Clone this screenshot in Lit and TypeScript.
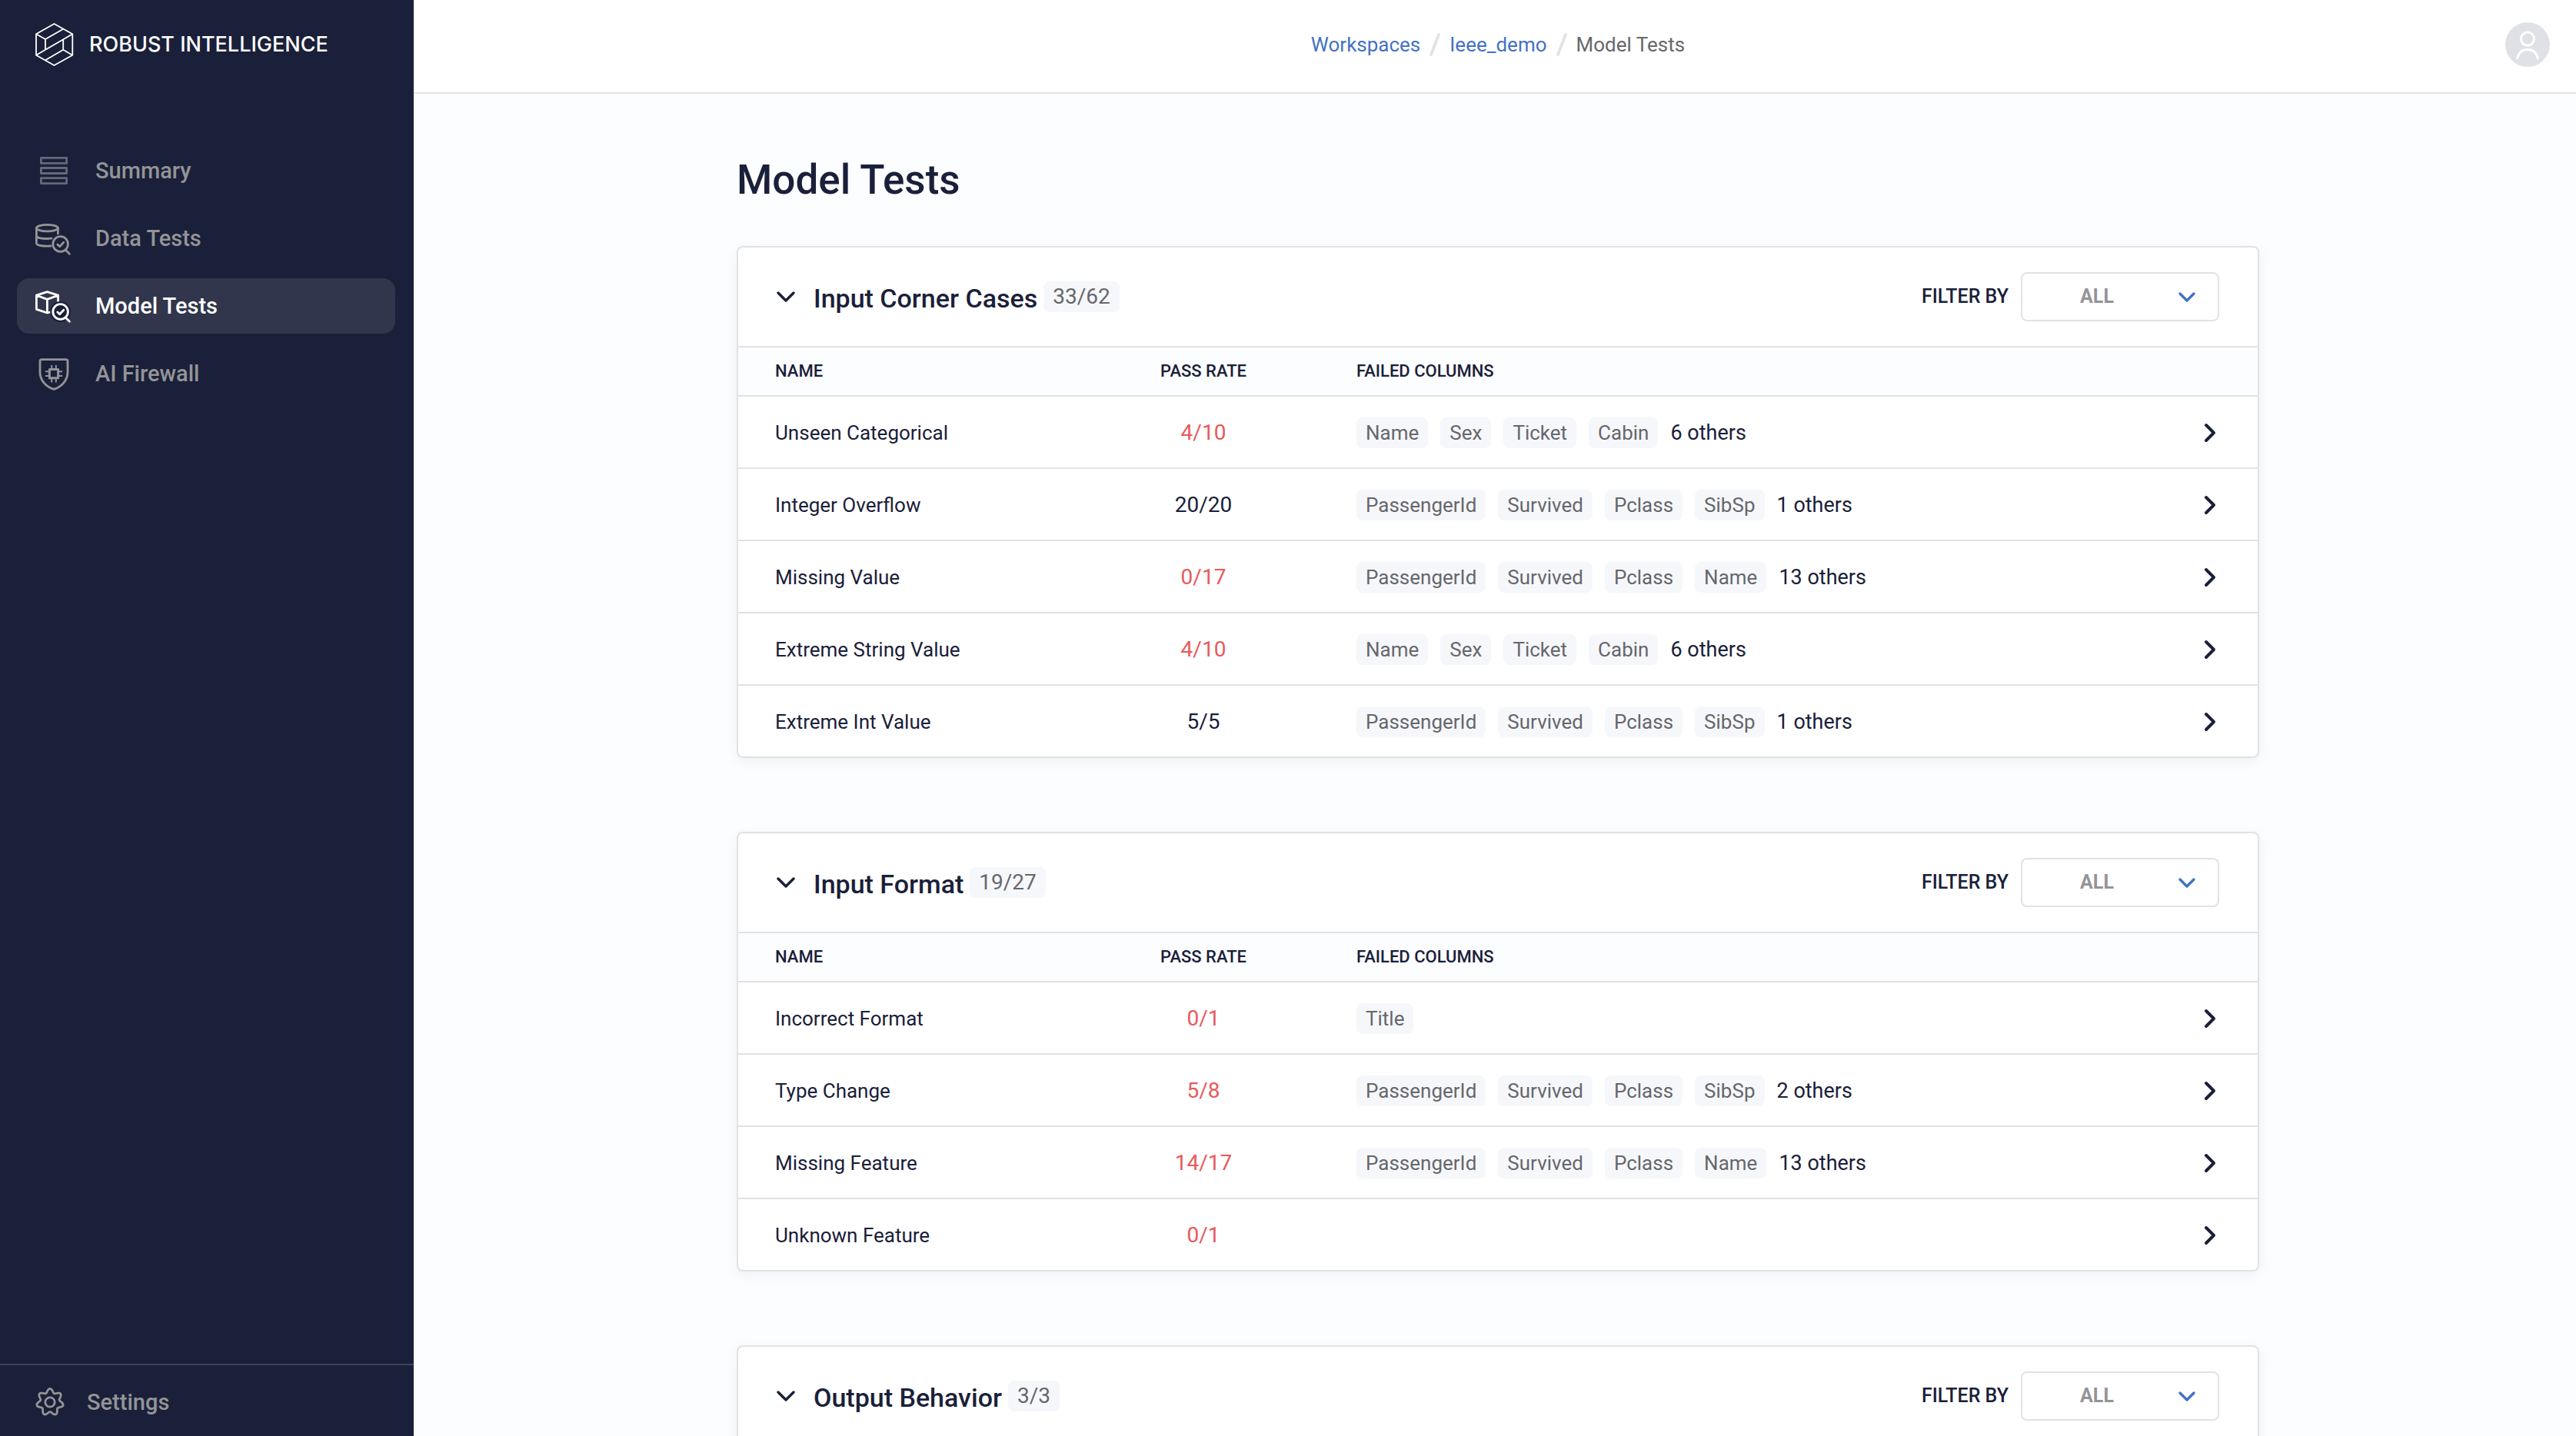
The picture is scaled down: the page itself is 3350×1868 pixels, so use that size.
import { LitElement, html, svg, css, nothing } from "lit";
import { customElement, property, state } from "lit/decorators.js";
import { classMap } from "lit/directives/class-map.js";

interface TestRow {
  name: string;
  passed: number;
  total: number;
  columns: string[];
  others?: number;
}

interface TestGroup {
  id: string;
  title: string;
  score: string;
  rows: TestRow[];
}

const GROUPS: TestGroup[] = [
  {
    id: "corner",
    title: "Input Corner Cases",
    score: "33/62",
    rows: [
      { name: "Unseen Categorical", passed: 4, total: 10, columns: ["Name", "Sex", "Ticket", "Cabin"], others: 6 },
      { name: "Integer Overflow", passed: 20, total: 20, columns: ["PassengerId", "Survived", "Pclass", "SibSp"], others: 1 },
      { name: "Missing Value", passed: 0, total: 17, columns: ["PassengerId", "Survived", "Pclass", "Name"], others: 13 },
      { name: "Extreme String Value", passed: 4, total: 10, columns: ["Name", "Sex", "Ticket", "Cabin"], others: 6 },
      { name: "Extreme Int Value", passed: 5, total: 5, columns: ["PassengerId", "Survived", "Pclass", "SibSp"], others: 1 },
    ],
  },
  {
    id: "format",
    title: "Input Format",
    score: "19/27",
    rows: [
      { name: "Incorrect Format", passed: 0, total: 1, columns: ["Title"] },
      { name: "Type Change", passed: 5, total: 8, columns: ["PassengerId", "Survived", "Pclass", "SibSp"], others: 2 },
      { name: "Missing Feature", passed: 14, total: 17, columns: ["PassengerId", "Survived", "Pclass", "Name"], others: 13 },
      { name: "Unknown Feature", passed: 0, total: 1, columns: [] },
    ],
  },
  { id: "output", title: "Output Behavior", score: "3/3", rows: [] },
];

/* Seven-lobed gear outline around (24, 24). */
const gearPath = (() => {
  const points: string[] = [];
  for (let i = 0; i < 140; i++) {
    const a = (i / 140) * Math.PI * 2;
    const r = 15 + 2.5 * Math.cos(7 * a);
    points.push(`${(24 + r * Math.sin(a)).toFixed(2)} ${(24 - r * Math.cos(a)).toFixed(2)}`);
  }
  return `M${points.join("L")}Z`;
})();

const loupe = svg`
  <circle cx="32.6" cy="31.5" r="9.8" />
  <path d="M39.6 39.6L44.4 44.2M28.8 32L31.6 34.8L36.8 29.2" />`;

const ICONS = {
  summary: svg`
    <g stroke="#646879" stroke-linejoin="round" stroke-width="2.8">
      <rect x="7.4" y="7.4" width="33.2" height="7" />
      <rect x="7.4" y="20.5" width="33.2" height="7" />
      <rect x="7.4" y="33.6" width="33.2" height="7" />
    </g>`,
  data: svg`
    <ellipse cx="15.4" cy="10.6" rx="14" ry="4.3" />
    <path d="M1.4 10.6V30.5C1.4 32.6 8 34.6 20 34M1.4 20.5C1.4 23.6 9 25.2 21 24.2M29.4 10.6V18" />
    ${loupe}`,
  model: svg`
    <path d="M1.4 10.2L15.4 5.6L29.6 10.2L15.4 15.4ZM1.4 10.2V28.4L15.4 33L19.4 32M15.4 15.4V33M29.6 10.2V18.6" />
    <circle cx="32.6" cy="31.5" r="13.4" fill="#1a2039" stroke="none" />
    ${loupe}`,
  firewall: svg`
    <path d="M8.2 5.6H39.8Q42 5.6 42 7.8V22C42 33 34 41 24 44.4C14 41 6 33 6 22V7.8Q6 5.6 8.2 5.6Z" />
    <rect x="18.4" y="18.4" width="11.2" height="11.4" stroke-width="3" />
    <path stroke-width="2" stroke-linecap="butt" d="M21.2 13V18M26.8 13V18M21.2 30V35.4M26.8 30V35.4M13 21.2H18M13 27H18M30 21.2H35M30 27H35" />`,
  settings: svg`<path d=${gearPath} /><circle cx="24" cy="24" r="6.2" />`,
};

type IconName = keyof typeof ICONS;

const icon = (name: IconName) => html`
  <svg width="48" height="48" viewBox="0 0 48 48" fill="none" stroke="currentColor"
    stroke-width="2.8" stroke-linecap="round" stroke-linejoin="round" aria-hidden="true">
    ${ICONS[name]}
  </svg>`;

const slash = html`
  <svg width="14" height="32" viewBox="0 0 14 32" fill="none" aria-hidden="true">
    <path d="M12 3L2 29" stroke="#e1e2e5" stroke-width="3.6" stroke-linecap="round" />
  </svg>`;

@customElement("side-nav")
class SideNav extends LitElement {
  static styles = css`
    :host {
      display: flex;
      flex-direction: column;
      flex: none;
      width: 538px;
      background: #1a2039;
      color: #949497;
    }
    .brand {
      display: flex;
      align-items: center;
      gap: 20px;
      height: 116px;
      padding: 0 46px;
      color: #fff;
      font: 500 27px/32px Inter, sans-serif;
      white-space: nowrap;
      text-decoration: none;
    }
    .menu {
      display: flex;
      flex-direction: column;
      gap: 16px;
      flex: 1;
      padding: 70px 24px 0 22px;
    }
    .item {
      display: flex;
      align-items: center;
      gap: 30px;
      height: 72px;
      padding: 0 24px;
      border-radius: 16px;
      color: inherit;
      font-weight: 500;
      font-size: 29px;
      line-height: 40px;
      text-decoration: none;
    }
    .item.active {
      background: #32364c;
      color: #fff;
    }
    .footer {
      border-top: 2px solid #414459;
      padding: 12px 19px 8px;
    }
    .footer .item {
      gap: 24px;
      padding: 0 22px;
    }
  `;

  render() {
    const items: [IconName, string][] = [
      ["summary", "Summary"],
      ["data", "Data Tests"],
      ["model", "Model Tests"],
      ["firewall", "AI Firewall"],
    ];
    return html`
      <a class="brand" href="#home">
        <svg width="50" height="56" viewBox="0 0 50 56" fill="none" stroke="#fff" stroke-width="1.8"
          stroke-linejoin="round" aria-hidden="true">
          <path d="M24.4 1L48.3 14.3V41.7L24.4 55L1 41.7V14.3Z" />
          <path d="M1 14.3L13 21L36.2 7.8M13 21V34.6M1 41.7L48.3 14.3M36.2 21.4V34.8L48.3 41.7M36.2 34.8L13 48.2" />
        </svg>
        <span>ROBUST INTELLIGENCE</span>
      </a>
      <nav class="menu">
        ${items.map(
          ([name, label]) => html`
            <a class=${classMap({ item: true, active: name === "model" })} href="#${name}">
              ${icon(name)}<span>${label}</span>
            </a>`
        )}
      </nav>
      <div class="footer">
        <a class="item" href="#settings">${icon("settings")}<span>Settings</span></a>
      </div>
    `;
  }
}

@customElement("top-bar")
class TopBar extends LitElement {
  static styles = css`
    :host {
      display: grid;
      grid-template-columns: 1fr auto 1fr;
      align-items: center;
      height: 116px;
      padding: 0 34px 4px 42px;
      border-bottom: 2px solid #e2e2e4;
      background: #fff;
    }
    .crumbs {
      display: flex;
      align-items: center;
      gap: 12px;
      grid-column: 2;
      font-size: 26px;
      line-height: 40px;
      color: #66676b;
    }
    .crumbs a {
      color: #4571c4;
      text-decoration: none;
    }
    .avatar {
      justify-self: end;
      width: 58px;
      height: 58px;
      padding: 0;
      border: 0;
      border-radius: 50%;
      background: #e0e1e6;
    }
    .avatar svg {
      display: block;
    }
  `;

  render() {
    return html`
      <nav class="crumbs" aria-label="Breadcrumb">
        <a href="#workspaces">Workspaces</a>${slash}<a href="#ieee_demo">Ieee_demo</a>${slash}<span>Model Tests</span>
      </nav>
      <button class="avatar" aria-label="Account">
        <svg width="58" height="58" viewBox="0 0 58 58" fill="none" stroke="#fff" stroke-width="3" stroke-linecap="round">
          <circle cx="29" cy="21.6" r="8.6" />
          <path d="M15.6 47C17.4 39.4 22.4 35.4 29 35.4S40.6 39.4 42.4 47" />
        </svg>
      </button>
    `;
  }
}

@customElement("test-card")
class TestCard extends LitElement {
  @property({ attribute: false }) group!: TestGroup;
  @state() private open = true;

  static styles = css`
    :host {
      display: block;
      border: 2px solid #e2e2e4;
      border-radius: 8px;
      background: #fff;
      box-shadow: 0 4px 16px rgba(26, 32, 57, 0.06);
      overflow: hidden;
    }
    .head {
      display: flex;
      align-items: center;
      height: 128px;
      padding: 0 50px 0 48px;
      border-bottom: 2px solid #e2e2e4;
    }
    .toggle {
      display: flex;
      margin-right: 22px;
      padding: 0;
      border: 0;
      background: none;
    }
    h2 {
      margin: 0;
      padding-top: 4px;
      font-weight: 500;
      font-size: 34px;
      line-height: 48px;
    }
    .chip {
      padding: 0 12px;
      border-radius: 8px;
      background: #f6f7fb;
      color: #66676b;
      font-size: 26px;
      line-height: 40px;
      white-space: nowrap;
    }
    .score {
      margin-left: 8px;
      font-size: 28px;
    }
    .filter {
      display: flex;
      align-items: center;
      gap: 16px;
      margin-left: auto;
      font-weight: 500;
      font-size: 25px;
      line-height: 32px;
    }
    .select {
      display: grid;
      align-items: center;
    }
    .select > * {
      grid-area: 1 / 1;
    }
    select {
      appearance: none;
      width: 258px;
      height: 64px;
      padding: 0 60px 0 0;
      border: 2px solid #e2e2e4;
      border-radius: 8px;
      background: #fff;
      color: #949497;
      font: inherit;
      font-weight: 700;
      text-align-last: center;
    }
    .caret {
      justify-self: end;
      margin-right: 30px;
      pointer-events: none;
    }
    table {
      width: 100%;
      table-layout: fixed;
      border-collapse: separate;
      border-spacing: 0;
      font-size: 26px;
      line-height: 40px;
    }
    .c-name {
      width: 430px;
    }
    .c-rate {
      width: 350px;
    }
    .c-go {
      width: 120px;
    }
    td {
      height: 90px;
      padding: 2px 24px 0;
      border-bottom: 2px solid #e2e2e4;
    }
    td.rate {
      font-size: 28px;
    }
    th {
      height: 62px;
      padding: 0 24px;
      border-bottom: 2px solid #e2e2e4;
      background: #fcfdff;
      font-weight: 500;
      font-size: 22px;
      line-height: 32px;
      text-align: left;
    }
    tr > :first-child {
      padding-left: 48px;
    }
    tbody tr:last-child td {
      border-bottom: 0;
    }
    .rate {
      text-align: center;
    }
    .failing {
      color: #e75a5a;
    }
    .chips {
      display: flex;
      align-items: center;
      gap: 16px;
    }
    .others {
      font-size: 27px;
    }
    .go {
      display: flex;
      justify-content: flex-end;
      padding-right: 26px;
    }
  `;

  private renderRow(row: TestRow) {
    return html`
      <tr>
        <td>${row.name}</td>
        <td class=${classMap({ rate: true, failing: row.passed < row.total })}>${row.passed}/${row.total}</td>
        <td>
          <div class="chips">
            ${row.columns.map((c) => html`<span class="chip">${c}</span>`)}
            ${row.others ? html`<span class="others">${row.others} others</span>` : nothing}
          </div>
        </td>
        <td>
          <a class="go" href="#${this.group.id}" aria-label="Open ${row.name}">
            <svg width="28" height="28" viewBox="0 0 28 28" fill="none" stroke="#1a2039" stroke-width="4"
              stroke-linecap="round" stroke-linejoin="round">
              <path d="M11 4L21 14L11 24" />
            </svg>
          </a>
        </td>
      </tr>`;
  }

  render() {
    const g = this.group;
    return html`
      <div class="head">
        <button class="toggle" aria-label="Toggle ${g.title}" aria-expanded=${this.open}
          @click=${() => (this.open = !this.open)}>
          <svg width="28" height="28" viewBox="0 0 28 28" fill="none" stroke="#1a2039" stroke-width="3.4"
            stroke-linecap="round" stroke-linejoin="round">
            <path d="M4 9L14 19L24 9" />
          </svg>
        </button>
        <h2>${g.title}</h2>
        <span class="chip score">${g.score}</span>
        <div class="filter">
          <label for="filter">FILTER BY</label>
          <div class="select">
            <select id="filter"><option>ALL</option></select>
            <svg class="caret" width="24" height="24" viewBox="0 0 24 24" fill="none" stroke="#4571c4"
              stroke-width="3.4" stroke-linecap="round" stroke-linejoin="round" aria-hidden="true">
              <path d="M3 8L12 17L21 8" />
            </svg>
          </div>
        </div>
      </div>
      ${this.open && g.rows.length
        ? html`
            <table>
              <colgroup>
                <col class="c-name" /><col class="c-rate" /><col /><col class="c-go" />
              </colgroup>
              <thead>
                <tr>
                  <th scope="col">NAME</th>
                  <th scope="col" class="rate">PASS RATE</th>
                  <th scope="col">FAILED COLUMNS</th>
                  <th></th>
                </tr>
              </thead>
              <tbody>
                ${g.rows.map((r) => this.renderRow(r))}
              </tbody>
            </table>`
        : nothing}
    `;
  }
}

@customElement("app-root")
class AppRoot extends LitElement {
  static styles = css`
    :host {
      display: flex;
      height: 100vh;
      overflow: hidden;
      background: #fcfdff;
      color: #1a2039;
      font-family: Roboto, sans-serif;
    }
    .page {
      display: flex;
      flex-direction: column;
      flex: 1;
      min-width: 0;
    }
    main {
      flex: 1;
      min-height: 0;
      overflow-y: auto;
      scrollbar-width: none;
      padding: 80px 40px 0 48px;
    }
    .content {
      max-width: 1980px;
      margin: 0 auto;
    }
    .cards {
      display: flex;
      flex-direction: column;
      gap: 96px;
    }
    h1 {
      margin: 0 0 54px;
      font-weight: 500;
      font-size: 53px;
      line-height: 64px;
    }
  `;

  render() {
    return html`
      <side-nav></side-nav>
      <div class="page">
        <top-bar></top-bar>
        <main>
          <div class="content">
            <h1>Model Tests</h1>
            <div class="cards">
              ${GROUPS.map((g) => html`<test-card .group=${g}></test-card>`)}
            </div>
          </div>
        </main>
      </div>
    `;
  }
}
